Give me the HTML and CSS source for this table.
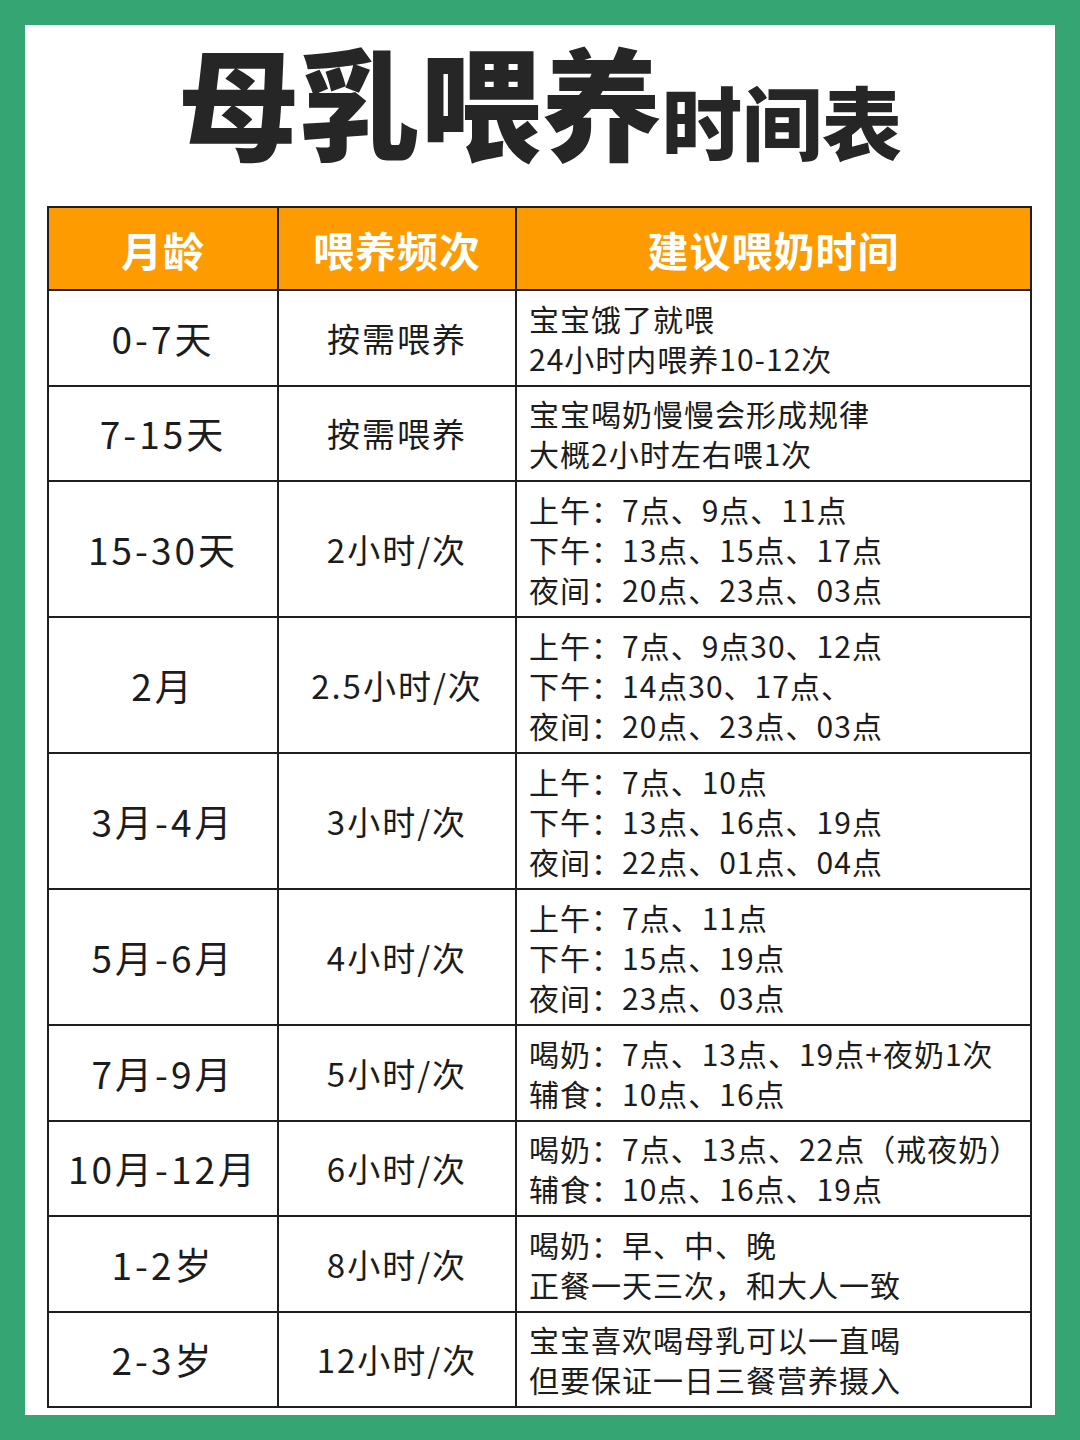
FILE: index.html
```html
<!DOCTYPE html>
<html lang="zh-CN">
<head>
<meta charset="utf-8">
<title>母乳喂养时间表</title>
<link rel="stylesheet" href="styles.css">
</head>
<body>
<div class="card">
  <h1 class="title"><span class="big">母乳喂养</span><span class="small">时间表</span></h1>
  <table class="sched">
    <colgroup><col class="c1"><col class="c2"><col class="c3"></colgroup>
    <thead>
      <tr class="head"><th>月龄</th><th>喂养频次</th><th>建议喂奶时间</th></tr>
    </thead>
    <tbody>
      <tr class="r2"><td class="age">0-7天</td><td class="freq">按需喂养</td><td class="tip">宝宝饿了就喂<br>24小时内喂养10-12次</td></tr>
      <tr class="r2"><td class="age">7-15天</td><td class="freq">按需喂养</td><td class="tip">宝宝喝奶慢慢会形成规律<br>大概2小时左右喂1次</td></tr>
      <tr class="r3"><td class="age">15-30天</td><td class="freq">2小时/次</td><td class="tip">上午：7点、9点、11点<br>下午：13点、15点、17点<br>夜间：20点、23点、03点</td></tr>
      <tr class="r3"><td class="age">2月</td><td class="freq">2.5小时/次</td><td class="tip">上午：7点、9点30、12点<br>下午：14点30、17点、<br>夜间：20点、23点、03点</td></tr>
      <tr class="r3"><td class="age">3月-4月</td><td class="freq">3小时/次</td><td class="tip">上午：7点、10点<br>下午：13点、16点、19点<br>夜间：22点、01点、04点</td></tr>
      <tr class="r3"><td class="age">5月-6月</td><td class="freq">4小时/次</td><td class="tip">上午：7点、11点<br>下午：15点、19点<br>夜间：23点、03点</td></tr>
      <tr class="r2"><td class="age">7月-9月</td><td class="freq">5小时/次</td><td class="tip">喝奶：7点、13点、19点+夜奶1次<br>辅食：10点、16点</td></tr>
      <tr class="r2"><td class="age">10月-12月</td><td class="freq">6小时/次</td><td class="tip">喝奶：7点、13点、22点（戒夜奶）<br>辅食：10点、16点、19点</td></tr>
      <tr class="r2"><td class="age">1-2岁</td><td class="freq">8小时/次</td><td class="tip">喝奶：早、中、晚<br>正餐一天三次，和大人一致</td></tr>
      <tr class="r2"><td class="age">2-3岁</td><td class="freq">12小时/次</td><td class="tip">宝宝喜欢喝母乳可以一直喝<br>但要保证一日三餐营养摄入</td></tr>
    </tbody>
  </table>
</div>
</body>
</html>
```

FILE: styles.css
```css
html, body {
  margin: 0;
  padding: 0;
}
body {
  background: #35a673;
  width: 1080px;
  height: 1440px;
  font-family: "Noto Sans CJK SC", "Noto Sans", sans-serif;
  color: #1c1c1c;
}
.card {
  margin: 25px;
  height: 1390px;
  background: #ffffff;
  padding: 0 22px;
  box-sizing: border-box;
}
.title {
  margin: 0;
  height: 181px;
  display: flex;
  justify-content: center;
  align-items: flex-end;
  padding-bottom: 47px;
  box-sizing: border-box;
  font-weight: 900;
  color: #262626;
  line-height: 1;
}
.title .big {
  font-size: 121px;
  letter-spacing: 0;
}
.title .small {
  font-size: 80px;
  margin-left: 0;
}
.sched {
  width: 983px;
  border-collapse: collapse;
  table-layout: fixed;
  border: 2px solid #1f1f1f;
}
.c1 { width: 230px; }
.c2 { width: 238px; }
.c3 { width: 515px; }
.sched th, .sched td {
  border: 2px solid #1f1f1f;
  padding: 0;
}
.head th {
  background: #fd9b00;
  color: #ffffff;
  font-size: 41px;
  font-weight: 700;
  height: 81px;
  text-align: center;
  letter-spacing: 1px;
}
.r2 td { height: 93.5px; }
.r3 td { height: 134px; }
.age {
  text-align: center;
  font-size: 37px;
  letter-spacing: 3px;
}
.freq {
  text-align: center;
  font-size: 33px;
  letter-spacing: 2px;
}
.tip {
  font-size: 30px;
  line-height: 40px;
  padding: 0 0 0 12px !important;
  letter-spacing: 1px;
}
```
